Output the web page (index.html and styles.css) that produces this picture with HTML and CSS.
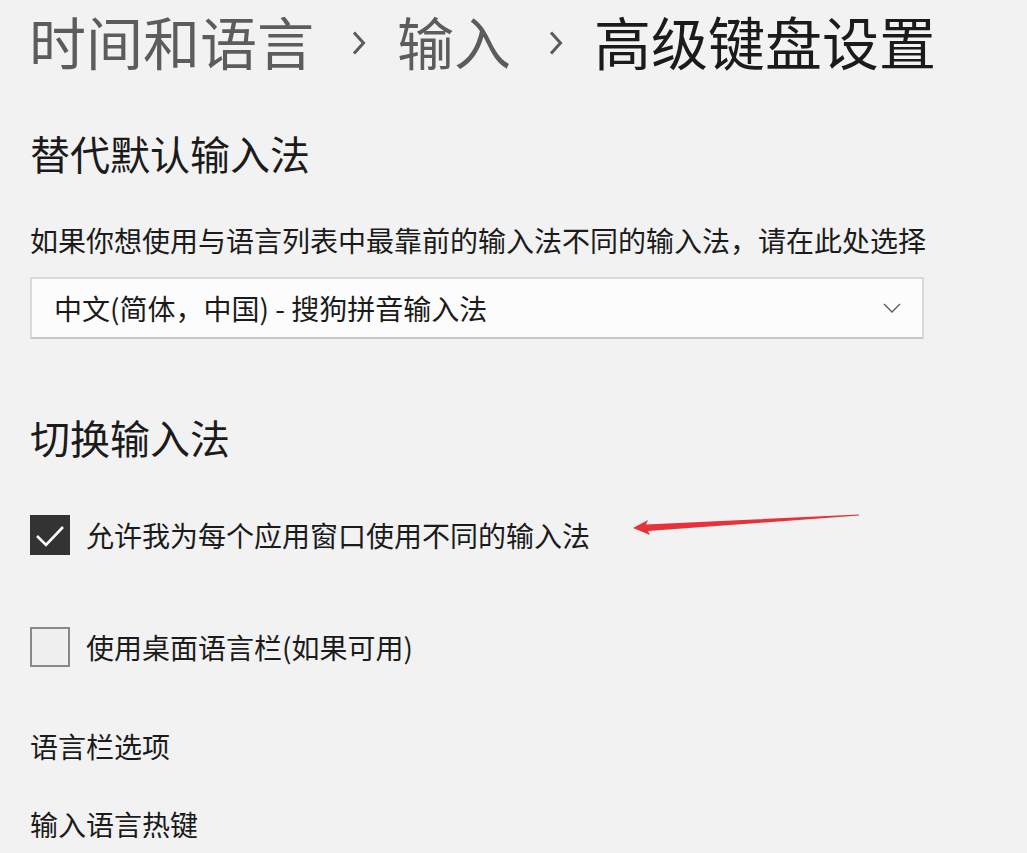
FILE: index.html
```html
<!DOCTYPE html>
<html lang="zh-CN">
<head>
    <meta charset="UTF-8">
    <title>高级键盘设置</title>
    <link rel="stylesheet" href="styles.css">
</head>
<body>
    <div class="page">
        <h1 class="crumbs">
            <span class="crumb">时间和语言</span>
            <svg class="sep" viewBox="0 0 14 24"><path d="M2 1.5 L11.5 12 L2 22.5" /></svg>
            <span class="crumb">输入</span>
            <svg class="sep" viewBox="0 0 14 24"><path d="M2 1.5 L11.5 12 L2 22.5" /></svg>
            <span class="crumb current">高级键盘设置</span>
        </h1>

        <h2 class="section first">替代默认输入法</h2>
        <p class="desc">如果你想使用与语言列表中最靠前的输入法不同的输入法，请在此处选择</p>
        <div class="select">
            <span>中文(简体，中国) - 搜狗拼音输入法</span>
            <svg class="caret" viewBox="0 0 18 10"><path d="M1 1 L9 9 L17 1" /></svg>
        </div>

        <h2 class="section">切换输入法</h2>
        <div class="check-row">
            <span class="box checked">
                <svg viewBox="0 0 40 40"><path d="M7 21 L16 30 L33 12" /></svg>
            </span>
            <span class="label">允许我为每个应用窗口使用不同的输入法</span>
            <svg class="annot" viewBox="0 0 240 30">
                <polygon points="0,16 15,8 13,12.5 226,2.5 226,3.6 15,19 17,23" />
            </svg>
        </div>
        <div class="check-row second">
            <span class="box"></span>
            <span class="label">使用桌面语言栏(如果可用)</span>
        </div>

        <a class="link first-link">语言栏选项</a>
        <a class="link second-link">输入语言热键</a>
    </div>
</body>
</html>
```

FILE: styles.css
```css
body {
    margin: 0;
    background: #f2f2f2;
    font-family: "Noto Sans CJK SC", "Noto Sans", sans-serif;
    color: #1b1b1b;
}
.page {
    padding: 0 30px;
}
.crumbs {
    margin: 12px 0 0 -1px;
    font-size: 57px;
    line-height: 56px;
    font-weight: normal;
    display: flex;
    align-items: center;
    white-space: nowrap;
}
.crumb { color: #5c5c5c; }
.crumb.current { color: #1b1b1b; }
.sep {
    width: 14px;
    height: 24px;
    margin: 0 31px 0 38px;
    position: relative;
    top: 3px;
}
.sep path {
    fill: none;
    stroke: #5a5a5a;
    stroke-width: 3;
}
.section {
    margin: 65px 0 0;
    font-size: 40px;
    line-height: 40px;
    font-weight: normal;
}
.section + .check-row { margin-top: 58px; }
.desc {
    margin: 53px 0 0;
    font-size: 28px;
    line-height: 28px;
}
.select {
    margin-top: 23px;
    width: 890px;
    height: 58px;
    background: #fcfcfc;
    border: 2px solid #dadada;
    border-bottom-color: #c8c8c8;
    display: flex;
    align-items: center;
    justify-content: space-between;
    font-size: 28px;
}
.select span { padding-left: 22px; }
.caret {
    width: 18px;
    height: 10px;
    margin-right: 21px;
}
.caret path {
    fill: none;
    stroke: #5a5a5a;
    stroke-width: 1.3;
}
.select + .section { margin-top: 78px; }
.check-row {
    display: flex;
    align-items: center;
    height: 40px;
    font-size: 28px;
    position: relative;
}
.check-row.second { margin-top: 72px; }
.box {
    width: 40px;
    height: 40px;
    box-sizing: border-box;
    border: 2px solid #888;
    background: #f0f0f0;
    margin-right: 16px;
}
.box.checked {
    background: #333;
    border-color: #333;
}
.box svg {
    width: 40px;
    height: 40px;
    display: block;
    position: relative;
    left: -2px;
    top: -2px;
}
.box path {
    fill: none;
    stroke: #fff;
    stroke-width: 2.6;
}
.annot {
    position: absolute;
    left: 603px;
    top: -3px;
    width: 240px;
    height: 30px;
}
.annot polygon { fill: #e6323b; }
.link {
    display: block;
    font-size: 28px;
    line-height: 28px;
    color: #1b1b1b;
}
.first-link { margin-top: 65px; }
.second-link { margin-top: 50px; }
```
